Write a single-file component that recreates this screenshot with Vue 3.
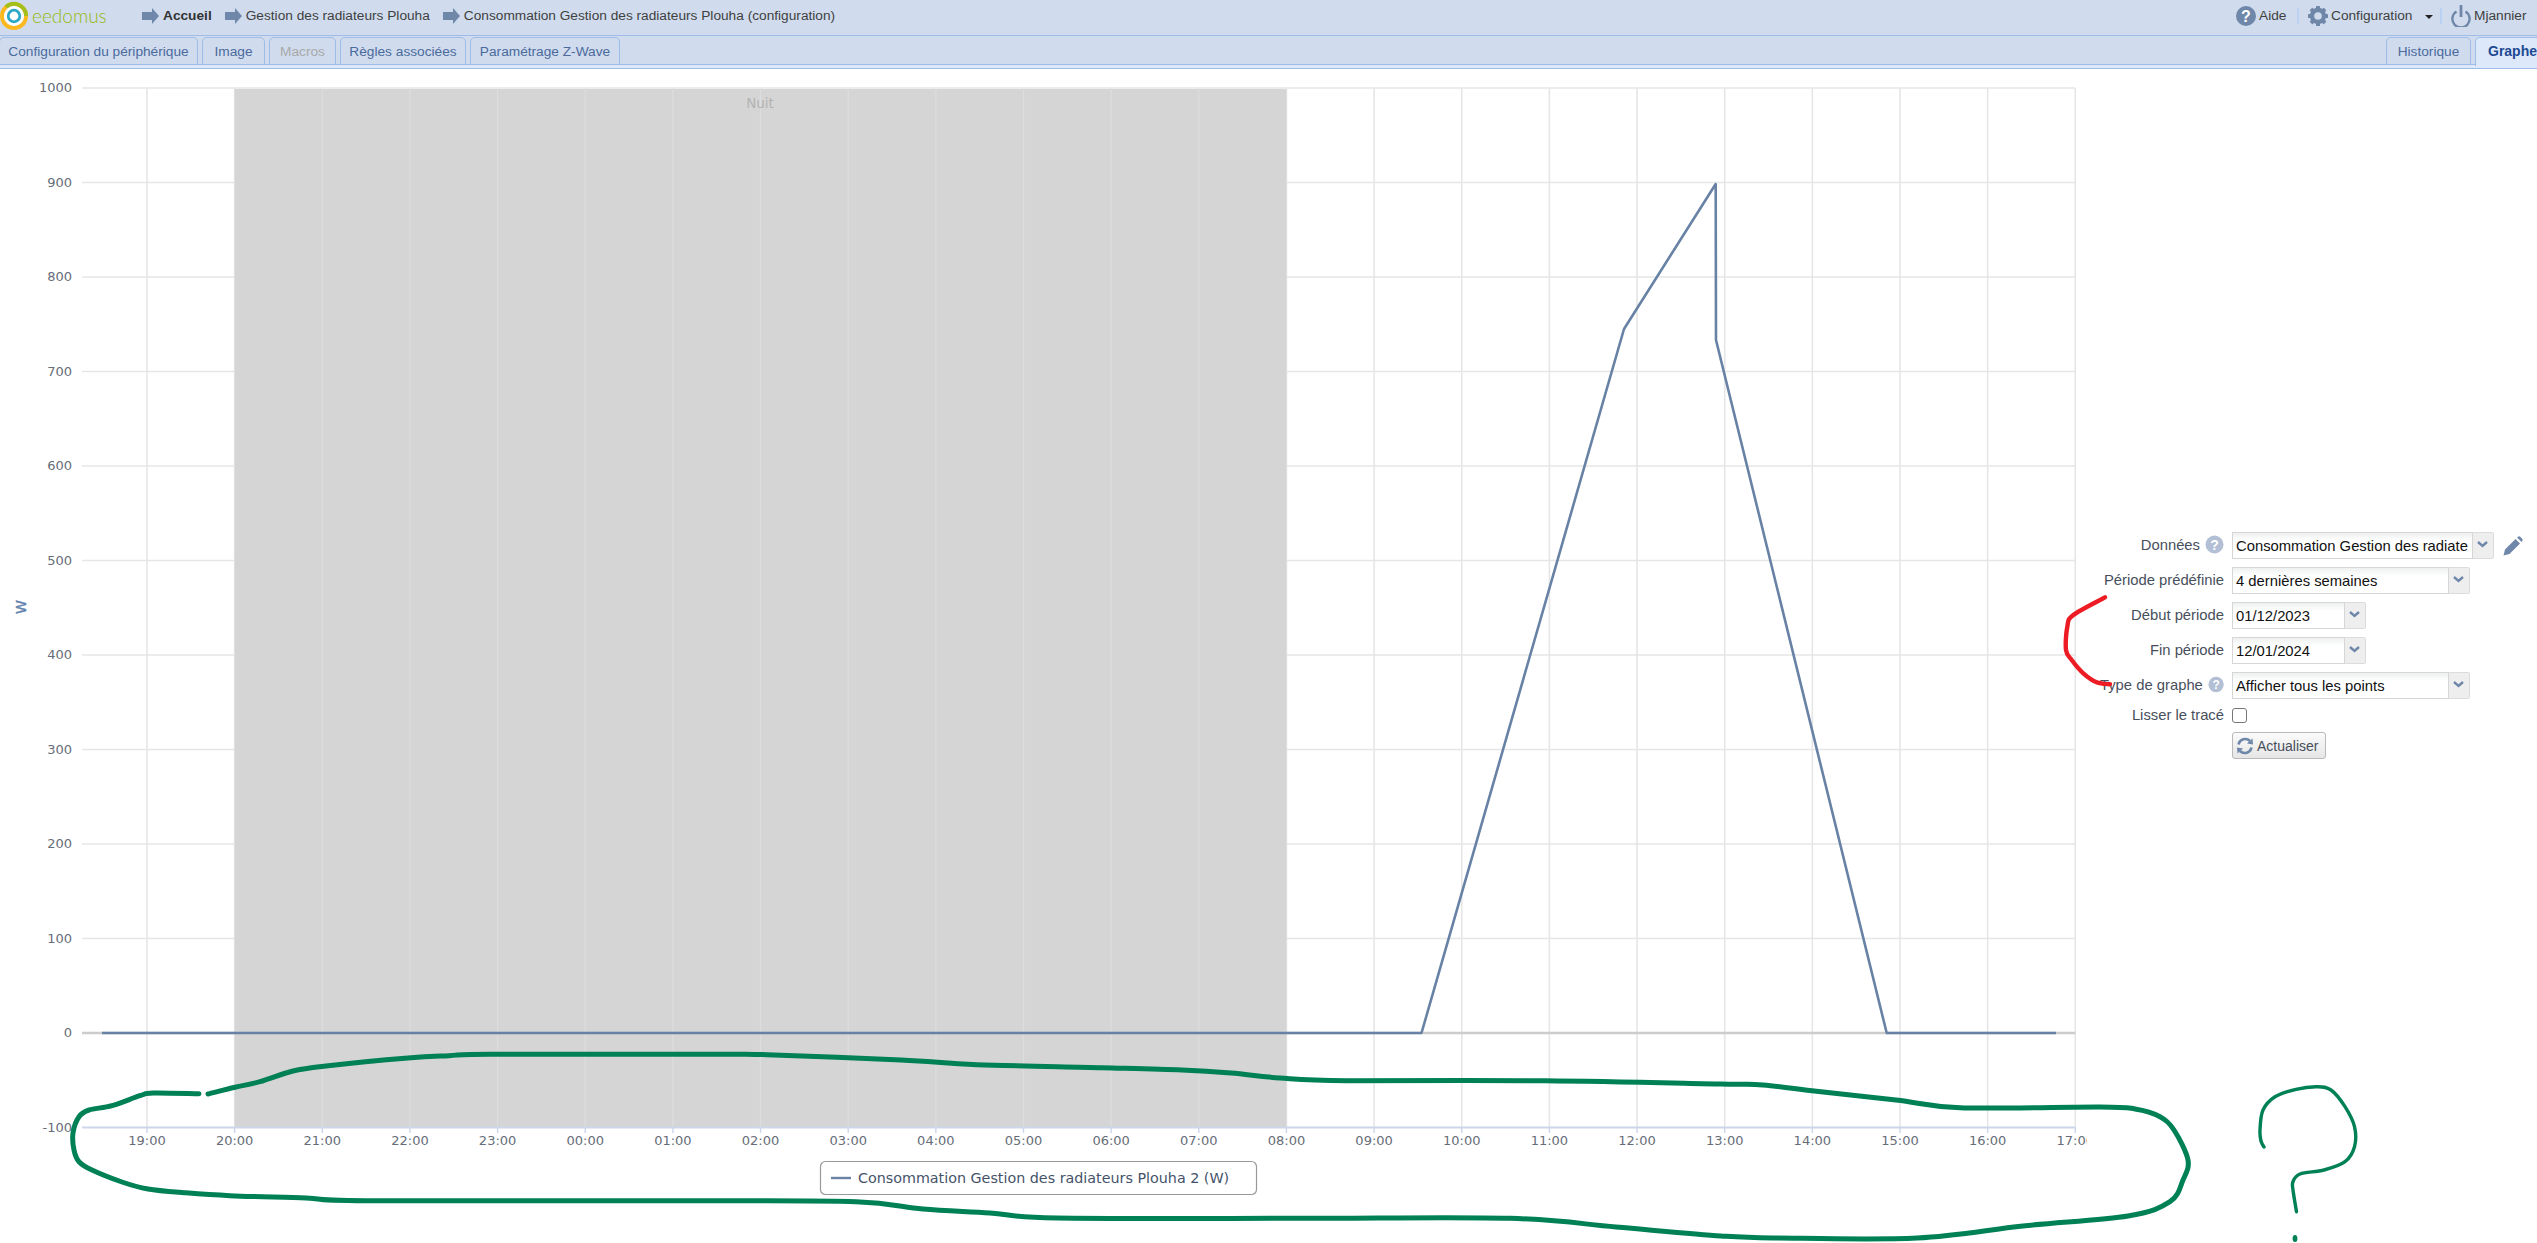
<script setup>
// chart geometry, in page pixels (the svg viewBox starts at the page y of the chart)
const x0 = 147
const hourW = 87.65
const yOf = (v) => 1033 - v * 0.945

const yVals = [1000, 900, 800, 700, 600, 500, 400, 300, 200, 100, 0, -100]
const hours = [19, 20, 21, 22, 23, 0, 1, 2, 3, 4, 5, 6, 7, 8, 9, 10, 11, 12, 13, 14, 15, 16, 17]
const ticks = hours.map((h, i) => ({
  x: x0 + i * hourW,
  label: String(h).padStart(2, '0') + ':00',
  night: i > 1 && i < 13,
}))

const bandX = x0 + hourW
const bandW = hourW * 12

const linePts = '102,1033 1421.5,1033 1624,329 1715.7,184 1716,340 1886.7,1033 2056,1033'

const smooth = (pts) => {
  let d = `M${pts[0][0]} ${pts[0][1]}`
  for (let i = 0; i < pts.length - 1; i++) {
    const p0 = pts[i - 1] || pts[i]
    const p1 = pts[i]
    const p2 = pts[i + 1]
    const p3 = pts[i + 2] || p2
    const c1x = p1[0] + (p2[0] - p0[0]) / 6
    const c1y = p1[1] + (p2[1] - p0[1]) / 6
    const c2x = p2[0] - (p3[0] - p1[0]) / 6
    const c2y = p2[1] - (p3[1] - p1[1]) / 6
    d += ` C${c1x.toFixed(1)} ${c1y.toFixed(1)} ${c2x.toFixed(1)} ${c2y.toFixed(1)} ${p2[0]} ${p2[1]}`
  }
  return d
}

const greenPath = smooth([
  [199, 1093.7], [153, 1093], [140, 1095.7], [112, 1105.7], [89, 1110], [79, 1116.7], [73, 1133], [74, 1150],
  [79, 1161.7], [92, 1170], [122, 1182], [148, 1189], [184, 1192.7], [230, 1195.7], [306, 1198], [367, 1200.7],
  [700, 1200.7], [856, 1201.7], [923, 1209], [990, 1213], [1057, 1218], [1300, 1218.3], [1510, 1218.3],
  [1616, 1227], [1721, 1236], [1777, 1238], [1917, 1238], [2023, 1226], [2128, 1216], [2170, 1201.7],
  [2183, 1180], [2188, 1160], [2174, 1130], [2160, 1116.7], [2135, 1109], [2100, 1107], [1960, 1107.7],
  [1896, 1100], [1812, 1090.7], [1763, 1085], [1721, 1084], [1545, 1080.7], [1347, 1080.7], [1280, 1078],
  [1231, 1073], [1182, 1070], [1102, 1067.7], [977, 1064.7], [901, 1060], [767, 1054.7], [714, 1054.3],
  [490, 1054.3], [449, 1055.7], [408, 1058], [326, 1066], [293, 1071], [260, 1081.7], [235, 1087.3], [208, 1094],
])

const questionPath = smooth([
  [2264, 1147], [2261, 1141], [2260, 1130], [2263, 1110], [2275, 1096.7], [2296, 1089.3], [2317, 1086.7],
  [2331, 1090], [2345, 1106.7], [2354.5, 1126.7], [2354.5, 1146.7], [2345, 1161.7], [2324, 1170], [2300, 1174],
  [2293, 1181.7], [2293, 1190], [2296.5, 1211.7],
])

const redPath = smooth([
  [2105, 597.3], [2073.3, 615], [2067.3, 626.7], [2066, 650], [2071.7, 660], [2083.3, 673.3], [2096.7, 682.3], [2110, 684.3],
])

const crumbs = [
  { text: 'Accueil', bold: true },
  { text: 'Gestion des radiateurs Plouha' },
  { text: 'Consommation Gestion des radiateurs Plouha (configuration)' },
]
const tabs = [
  { text: 'Configuration du périphérique', w: 199 },
  { text: 'Image', w: 63 },
  { text: 'Macros', w: 67, disabled: true },
  { text: 'Règles associées', w: 126 },
  { text: 'Paramétrage Z-Wave', w: 150 },
]
const gearTeeth = [0, 45, 90, 135, 180, 225, 270, 315]

const fields = [
  { label: 'Données', help: true, value: 'Consommation Gestion des radiate', w: 241, pen: true },
  { label: 'Période prédéfinie', value: '4 dernières semaines', w: 217 },
  { label: 'Début période', value: '01/12/2023', w: 113 },
  { label: 'Fin période', value: '12/01/2024', w: 113 },
  { label: 'Type de graphe', help: true, value: 'Afficher tous les points', w: 217 },
]
</script>

<template>
  <div class="page">
    <header class="topbar">
      <div class="brand">
        <svg class="logo" width="30" height="32" viewBox="0 0 30 32">
          <circle cx="14" cy="16" r="12" fill="none" stroke="#fbb91f" stroke-width="4" />
          <path d="M6 7 A12 12 0 0 1 26 16" fill="none" stroke="#a3bf1c" stroke-width="4" />
          <circle cx="14" cy="16" r="10" fill="#fff" />
          <circle cx="14" cy="16" r="5.8" fill="none" stroke="#2ba7c6" stroke-width="2.8" />
        </svg>
        <span class="brand-name">eedomus</span>
      </div>
      <nav class="crumbs">
        <div v-for="c in crumbs" :key="c.text" class="crumb" :class="{ bold: c.bold }">
          <svg width="17" height="16" viewBox="0 0 17 16"><polygon points="0,4 10,4 10,0 17,8 10,16 10,12 0,12" fill="#6f87a8" /></svg>
          <span>{{ c.text }}</span>
        </div>
      </nav>
      <div class="tools">
        <div class="tool help">
          <svg width="20" height="20" viewBox="0 0 20 20">
            <circle cx="10" cy="10" r="10" fill="#6f87a8" />
            <text x="10" y="15.5" text-anchor="middle" class="q">?</text>
          </svg>
          <span>Aide</span>
        </div>
        <i class="sep"></i>
        <div class="tool config">
          <svg width="20" height="20" viewBox="0 0 20 20">
            <circle cx="10" cy="10" r="6" fill="none" stroke="#6f87a8" stroke-width="4.4" />
            <rect v-for="a in gearTeeth" :key="a" x="8" y="0" width="4" height="4" rx="0.6" fill="#6f87a8" :transform="`rotate(${a} 10 10)`" />
          </svg>
          <span>Configuration</span>
          <b class="caret"></b>
        </div>
        <i class="sep"></i>
        <div class="tool user">
          <svg width="20" height="22" viewBox="0 0 20 22">
            <path d="M5.5 6.5 A8.6 8.6 0 1 0 14.5 6.5" fill="none" stroke="#6f87a8" stroke-width="2.4" />
            <rect x="8.6" y="0" width="2.8" height="12" fill="#6f87a8" />
          </svg>
          <span>Mjannier</span>
          <b class="caret caret-user"></b>
        </div>
      </div>
    </header>

    <div class="tabbar">
      <div class="tabgroup">
        <div v-for="t in tabs" :key="t.text" class="tab" :class="{ disabled: t.disabled }" :style="{ width: t.w + 'px' }">{{ t.text }}</div>
      </div>
      <div class="tabgroup">
        <div class="tab" :style="{ width: '85px' }">Historique</div>
        <div class="tab active">Graphe</div>
      </div>
    </div>

    <main class="main">
      <svg class="chart" width="2100" height="1174" viewBox="0 69 2100 1174">
        <defs>
          <clipPath id="axisclip"><rect x="0" y="1130" width="2087" height="30" /></clipPath>
        </defs>
        <line v-for="v in yVals.slice(0, -1)" :key="v" x1="82" :x2="x0 + hourW * 22" :y1="yOf(v)" :y2="yOf(v)" class="grid" />
        <line v-for="t in ticks" :key="t.x" :x1="t.x" :x2="t.x" y1="88" y2="1127" class="grid" />
        <rect :x="bandX" y="89" :width="bandW" height="1038" fill="#d5d5d5" />
        <template v-for="t in ticks" :key="'n' + t.x">
          <line v-if="t.night" :x1="t.x" :x2="t.x" y1="89" y2="1127" class="grid-night" />
        </template>
        <text x="760" y="108" text-anchor="middle" class="nuit">Nuit</text>

        <line x1="82" :x2="x0 + hourW * 22" y1="1033" y2="1033" class="zero" />
        <line x1="82" :x2="x0 + hourW * 22" y1="1127.5" y2="1127.5" class="axis" />
        <line v-for="t in ticks" :key="'t' + t.x" :x1="t.x" :x2="t.x" y1="1127" y2="1133" class="axis-tick" />

        <polyline :points="linePts" class="series" />

        <text v-for="v in yVals" :key="'y' + v" x="72" :y="yOf(v) + 4" text-anchor="end" class="lbl">{{ v }}</text>
        <g clip-path="url(#axisclip)">
          <text v-for="t in ticks" :key="'l' + t.x" :x="t.x" y="1145" text-anchor="middle" class="lbl">{{ t.label }}</text>
        </g>
        <text x="26" y="607" text-anchor="middle" transform="rotate(-90 26 607)" class="ytitle">W</text>

        <rect x="820.5" y="1161.5" width="436" height="33" rx="5" class="legend-box" />
        <line x1="831" x2="851" y1="1178" y2="1178" class="legend-line" />
        <text x="858" y="1183" class="legend-text">Consommation Gestion des radiateurs Plouha 2 (W)</text>
      </svg>

      <form class="form" @submit.prevent>
        <template v-for="f in fields" :key="f.label">
          <div class="label">
            <span>{{ f.label }}</span>
            <svg v-if="f.help" width="19" height="19" viewBox="0 0 19 19">
              <circle cx="9.5" cy="9.5" r="9" fill="#b2bfd4" />
              <text x="9.5" y="14.5" text-anchor="middle" class="q q-small">?</text>
            </svg>
          </div>
          <div class="control">
            <div class="select">
              <div class="value" :style="{ width: f.w + 'px' }">{{ f.value }}</div>
              <div class="drop">
                <svg width="11" height="7" viewBox="0 0 11 7"><polyline points="1,1 5.5,5 10,1" fill="none" stroke="#6f87a8" stroke-width="2.4" /></svg>
              </div>
            </div>
            <svg v-if="f.pen" class="pen" width="20" height="20" viewBox="0 0 20 20">
              <path d="M0.5 19.5 L2 13.5 L12.5 3 L17 7.5 L6.5 18 Z" fill="#6f87a8" />
              <path d="M14 1.5 L15.5 0.5 Q16.5 0 17.5 1 L19 2.5 Q20 3.5 19.5 4.5 L18.5 6 Z" fill="#6f87a8" />
            </svg>
          </div>
        </template>
        <div class="label">Lisser le tracé</div>
        <div class="control check-row"><input type="checkbox" class="check" /></div>
        <div></div>
        <div class="control">
          <button type="button" class="refresh">
            <svg width="18" height="18" viewBox="0 0 18 18">
              <path d="M2.5 7.5 A6.8 6.8 0 0 1 14 4" fill="none" stroke="#6f87a8" stroke-width="2.6" />
              <polygon points="11,6.5 17,7.5 16.5,1.5" fill="#6f87a8" />
              <path d="M15.5 10.5 A6.8 6.8 0 0 1 4 14" fill="none" stroke="#6f87a8" stroke-width="2.6" />
              <polygon points="7,11.5 1,10.5 1.5,16.5" fill="#6f87a8" />
            </svg>
            <span>Actualiser</span>
          </button>
        </div>
      </form>
    </main>

    <!-- marks drawn by hand over the screenshot -->
    <svg class="marks" width="2537" height="1243" viewBox="0 0 2537 1243">
      <path :d="greenPath" class="mark-green" />
      <path :d="questionPath" class="mark-q" />
      <ellipse cx="2295" cy="1238.5" rx="2.4" ry="3.6" fill="#008055" />
      <path :d="redPath" class="mark-red" />
    </svg>
  </div>
</template>

<style scoped>
.page {
  position: relative;
  width: 2575px;
  height: 1243px;
  overflow: hidden;
  background: #fff;
  font-family: "Liberation Sans", Arial, sans-serif;
  font-size: 13.7px;
  color: #3f3f3f;
}

.topbar {
  display: flex;
  align-items: center;
  box-sizing: border-box;
  height: 36px;
  padding-bottom: 4px;
  background: #d0dcee;
  border-bottom: 1px solid #9dbde8;
}
.brand {
  display: flex;
  align-items: center;
  width: 142px;
  flex: none;
}
.logo {
  flex: none;
  margin-right: 2px;
}
.brand-name {
  font-family: Lato, "Open Sans", sans-serif;
  font-size: 19px;
  font-weight: 300;
  color: #96b90f;
}
.crumbs {
  display: flex;
  gap: 13px;
}
.crumb {
  display: flex;
  align-items: center;
  gap: 4px;
  white-space: nowrap;
}
.crumb.bold {
  font-weight: 700;
  color: #333;
}
.tools {
  position: absolute;
  left: 2236px;
  top: 0;
  height: 31px;
  display: flex;
  align-items: center;
}
.tool {
  display: flex;
  align-items: center;
  gap: 3px;
  white-space: nowrap;
}
.help {
  width: 61px;
}
.config {
  width: 132px;
  margin-left: 9px;
}
.user {
  margin-left: 9px;
}
.sep {
  width: 2px;
  height: 16px;
  background: #b9d1f2;
}
.caret {
  width: 0;
  height: 0;
  margin-left: 10px;
  margin-top: 2px;
  border-left: 4px solid transparent;
  border-right: 4px solid transparent;
  border-top: 4px solid #222;
}
.caret-user {
  margin-left: 7px;
}
.q {
  fill: #fff;
  font-family: "Liberation Sans", Arial, sans-serif;
  font-weight: 700;
  font-size: 16px;
}
.q-small {
  font-size: 14px;
}

.tabbar {
  display: flex;
  justify-content: space-between;
  height: 28px;
  padding-top: 1px;
  background: #d0dcee;
  border-bottom: 3px solid #dde8fb;
  box-shadow: inset 0 -1px 0 #9dbde8;
}
.tabgroup {
  display: flex;
  gap: 4px;
}
.tab {
  box-sizing: border-box;
  height: 28px;
  border: 1px solid #9dbde8;
  border-radius: 5px 5px 0 0;
  text-align: center;
  line-height: 27px;
  color: #4a6a9c;
  white-space: nowrap;
  font-size: 13.7px;
}
.tab:first-child {
  margin-left: -1px;
}
.tabgroup + .tabgroup .tab:first-child {
  margin-left: 0;
}
.tab.disabled {
  color: #a9a9a9;
}
.tab.active {
  width: 100px;
  height: 29px;
  padding-left: 12px;
  text-align: left;
  font-weight: 700;
  font-size: 14px;
  color: #1d4a92;
  background: #dde8fb;
  border-bottom: none;
}

.main {
  display: flex;
  align-items: flex-start;
  border-top: 1px solid #9dbde8;
}
.chart {
  display: block;
  flex: none;
}
.grid {
  stroke: #e6e6e6;
  stroke-width: 1.6;
}
.grid-night {
  stroke: #dcdde0;
  stroke-width: 1.2;
}
.zero {
  stroke: #cccccc;
  stroke-width: 2.6;
}
.axis {
  stroke: #ccd6eb;
  stroke-width: 2;
}
.axis-tick {
  stroke: #ccd6eb;
  stroke-width: 1.4;
}
.series {
  fill: none;
  stroke: #6882a5;
  stroke-width: 2.6;
  stroke-linejoin: round;
}
.lbl {
  font-family: "DejaVu Sans", sans-serif;
  font-size: 13px;
  fill: #666d78;
}
.nuit {
  font-family: "DejaVu Sans", sans-serif;
  font-size: 13.5px;
  fill: #b3b3b3;
}
.ytitle {
  font-family: "DejaVu Sans", sans-serif;
  font-size: 14px;
  fill: #6282ad;
  stroke: #6282ad;
  stroke-width: 0.4;
}
.legend-box {
  fill: #fff;
  stroke: #999;
  stroke-width: 1.2;
}
.legend-line {
  stroke: #6882a5;
  stroke-width: 2.4;
}
.legend-text {
  font-family: "DejaVu Sans", sans-serif;
  font-size: 14.3px;
  fill: #45536a;
}

.form {
  display: grid;
  grid-template-columns: 124px auto;
  column-gap: 8px;
  row-gap: 8px;
  grid-auto-rows: minmax(17px, auto);
  padding-top: 463px;
  font-size: 14.8px;
}
.label {
  display: flex;
  align-items: center;
  justify-content: flex-end;
  gap: 5px;
  color: #474f5c;
  white-space: nowrap;
  margin-top: -2px;
}
.control {
  display: flex;
  align-items: center;
}
.select {
  display: flex;
  height: 27px;
}
.value {
  box-sizing: border-box;
  height: 27px;
  padding: 0 3px;
  line-height: 27px;
  overflow: hidden;
  white-space: nowrap;
  color: #111;
  background: linear-gradient(#eef0f0, #fff 8px);
  border: 1px solid #d6d6d6;
}
.drop {
  box-sizing: border-box;
  width: 21px;
  height: 27px;
  padding: 8px 0 0 4px;
  line-height: 0;
  background: #eeeeee;
  border: 1px solid #dcdcdc;
  border-left: none;
  border-radius: 0 2px 2px 0;
}
.pen {
  margin-left: 9px;
}
.check-row {
  height: 17px;
}
.check {
  appearance: none;
  margin: 0;
  width: 15px;
  height: 15px;
  background: #fff;
  border: 1px solid #777;
  border-radius: 3px;
}
.refresh {
  display: flex;
  align-items: center;
  gap: 3px;
  box-sizing: border-box;
  width: 94px;
  height: 27px;
  padding: 0 0 0 3px;
  font: inherit;
  font-size: 14px;
  color: #474f5c;
  background: linear-gradient(#fbfbfb, #e6e6e6);
  border: 1px solid #b9b9b9;
  border-radius: 3px;
}

.marks {
  position: absolute;
  left: 0;
  top: 0;
  pointer-events: none;
}
.mark-green {
  fill: none;
  stroke: #008055;
  stroke-width: 5;
  stroke-linecap: round;
  stroke-linejoin: round;
}
.mark-q {
  fill: none;
  stroke: #008055;
  stroke-width: 3.4;
  stroke-linecap: round;
}
.mark-red {
  fill: none;
  stroke: #ed1c24;
  stroke-width: 4.4;
  stroke-linecap: round;
}
</style>

<style>
html, body {
  margin: 0;
  overflow: hidden;
  background: #fff;
}
</style>
